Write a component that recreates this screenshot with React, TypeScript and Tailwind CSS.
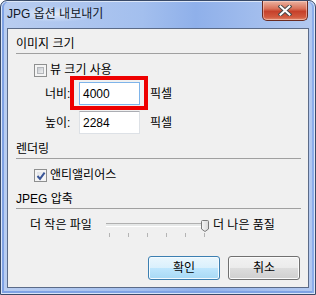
const FONT = '"Liberation Sans", "Noto Sans CJK KR", sans-serif';

function CheckBox({ checked = false }: { checked?: boolean }) {
  return (
    <span className="relative flex h-[13px] w-[13px] shrink-0 border border-[#8e8f8f] bg-[#f4f4f4] p-[2px]">
      <span
        className={
          checked
            ? "block h-full w-full bg-[linear-gradient(135deg,#dfe2e6,#fafafa)]"
            : "block h-full w-full border border-[#b3b6ba] bg-[linear-gradient(135deg,#c6cad0,#f0f0f0)]"
        }
      />
      {checked && (
        <svg className="absolute left-[1px] top-[1px]" width="10" height="10" viewBox="0 0 10 10">
          <path d="M1.5 5 L4 7.8 L8.6 1.6" fill="none" stroke="#3a5698" strokeWidth="2" />
        </svg>
      )}
    </span>
  );
}

function SectionHeader({ title }: { title: string }) {
  return (
    <div className="h-[18px] border-b border-[#a0a0a0] pb-[1px] leading-[16px]">{title}</div>
  );
}

function Slider() {
  const ticks = [6, 25, 44, 63, 82, 101];
  return (
    <div className="relative h-[20px] w-[106px] shrink-0">
      <div className="absolute left-[3px] top-[6px] h-[3px] w-[96px] border-t border-[#b0b0b0] bg-[#e6e8e8] shadow-[0_1px_0_#ffffff]" />
      {ticks.map((x) => (
        <div key={x} className="absolute top-[16px] h-[4px] w-[1px] bg-[#b4b4b4]" style={{ left: x }} />
      ))}
      <svg className="absolute left-[98px] top-[3px]" width="8" height="12" viewBox="0 0 8 12">
        <defs>
          <linearGradient id="thumb" x1="0" y1="0" x2="1" y2="0">
            <stop offset="0" stopColor="#f6f6f6" />
            <stop offset="1" stopColor="#d8d8d8" />
          </linearGradient>
        </defs>
        <path d="M1.5 0.5 H6.5 Q7.5 0.5 7.5 1.5 V9 L4 11.5 L0.5 9 V1.5 Q0.5 0.5 1.5 0.5 Z" fill="url(#thumb)" stroke="#7a7a7a" />
      </svg>
    </div>
  );
}

export default function App() {
  return (
    <div
      className="flex h-[295px] w-[316px] flex-col rounded-t-[7px] border border-[#394a68] bg-[linear-gradient(to_right,#b9cdf0,#a3bfee_45%,#8fb0ea_62%,#b3c9f0)] text-[12px] text-black shadow-[inset_0_0_0_1px_#dbe6f8,inset_2px_0_0_1px_#7fa2e4,inset_-2px_0_0_1px_#8cadea,inset_0_-2px_0_1px_#7fa2e4]"
      style={{ fontFamily: FONT }}
    >
      {/* title bar */}
      <div className="flex h-[27px] items-start justify-between pl-[6px] pr-[7px]">
        <div className="mt-[5px] rounded-[8px] bg-[radial-gradient(ellipse_at_center,rgba(235,242,252,0.85),rgba(235,242,252,0)_70%)] leading-[16px] text-[#101828]">
          JPG 옵션 내보내기
        </div>
        <div className="flex h-[20px] w-[46px] items-center justify-center rounded-b-[5px] border border-t-0 border-[#6a2b22] bg-[linear-gradient(to_bottom,#eab3a2,#d9725a_40%,#c6412b_55%,#d25a3f_85%,#e08b6f)] shadow-[inset_0_0_0_1px_rgba(255,220,210,0.5)]">
          <svg width="14" height="11" viewBox="0 0 14 11">
            <path d="M2.5 1.5 L11.5 9.5 M11.5 1.5 L2.5 9.5" stroke="#4a4a4a" strokeWidth="4" strokeLinecap="square" />
            <path d="M2.5 1.5 L11.5 9.5 M11.5 1.5 L2.5 9.5" stroke="#ffffff" strokeWidth="2" strokeLinecap="square" />
          </svg>
        </div>
      </div>

      {/* client area */}
      <div className="mx-[6px] flex h-[260px] flex-col border border-[#5b6b88] bg-[#f0f0f0] pb-[6px] pl-[8px] pr-[7px] pt-[7px]">
        <SectionHeader title="이미지 크기" />

        <div className="ml-[18px] mt-[8px] flex h-[16px] items-center gap-[3px] leading-[16px]">
          <CheckBox />
          <span>뷰 크기 사용</span>
        </div>

        <div className="ml-[29px] mt-[4px] flex h-[23px] items-center">
          <span className="w-[34px] leading-[16px]">너비:</span>
          <div className="relative">
            <div className="flex h-[23px] w-[61px] items-center border border-[#7eb4ea] bg-white pl-[3px] leading-[16px]">
              4000
            </div>
            <div className="absolute left-[-9px] top-[-6px] h-[34px] w-[78px] border-[4px] border-[#ee0000]" />
          </div>
          <span className="ml-[10px] leading-[16px]">픽셀</span>
        </div>

        <div className="ml-[29px] mt-[6px] flex h-[23px] items-center">
          <span className="w-[34px] leading-[16px]">높이:</span>
          <div className="flex h-[23px] w-[61px] items-center border border-[#dde1e6] border-t-[#abadb3] bg-white pl-[3px] leading-[16px]">
            2284
          </div>
          <span className="ml-[10px] leading-[16px]">픽셀</span>
        </div>

        <div className="mt-[7px]">
          <SectionHeader title="렌더링" />
        </div>

        <div className="ml-[18px] mt-[8px] flex h-[16px] items-center gap-[3px] leading-[16px]">
          <CheckBox checked />
          <span>앤티앨리어스</span>
        </div>

        <div className="mt-[8px]">
          <SectionHeader title="JPEG 압축" />
        </div>

        <div className="ml-[14px] mt-[8px] flex h-[20px] items-start">
          <span className="w-[73px] leading-[16px]">더 작은 파일</span>
          <Slider />
          <span className="ml-[4px] leading-[16px]">더 나은 품질</span>
        </div>

        <div className="mt-[19px] flex justify-end gap-[8px] pr-[1px]">
          <button className="h-[24px] w-[72px] rounded-[3px] border border-[#3c7fb1] bg-[linear-gradient(to_bottom,#eaf6fd,#d9f0fc_50%,#bee6fd_50%,#a7d9f5)] leading-[16px] shadow-[inset_0_0_0_1px_#f4fbff]">
            확인
          </button>
          <button className="h-[24px] w-[72px] rounded-[3px] border border-[#707070] bg-[linear-gradient(to_bottom,#f2f2f2,#ebebeb_50%,#dddddd_50%,#cfcfcf)] leading-[16px] shadow-[inset_0_0_0_1px_#fbfbfb]">
            취소
          </button>
        </div>
      </div>
    </div>
  );
}
